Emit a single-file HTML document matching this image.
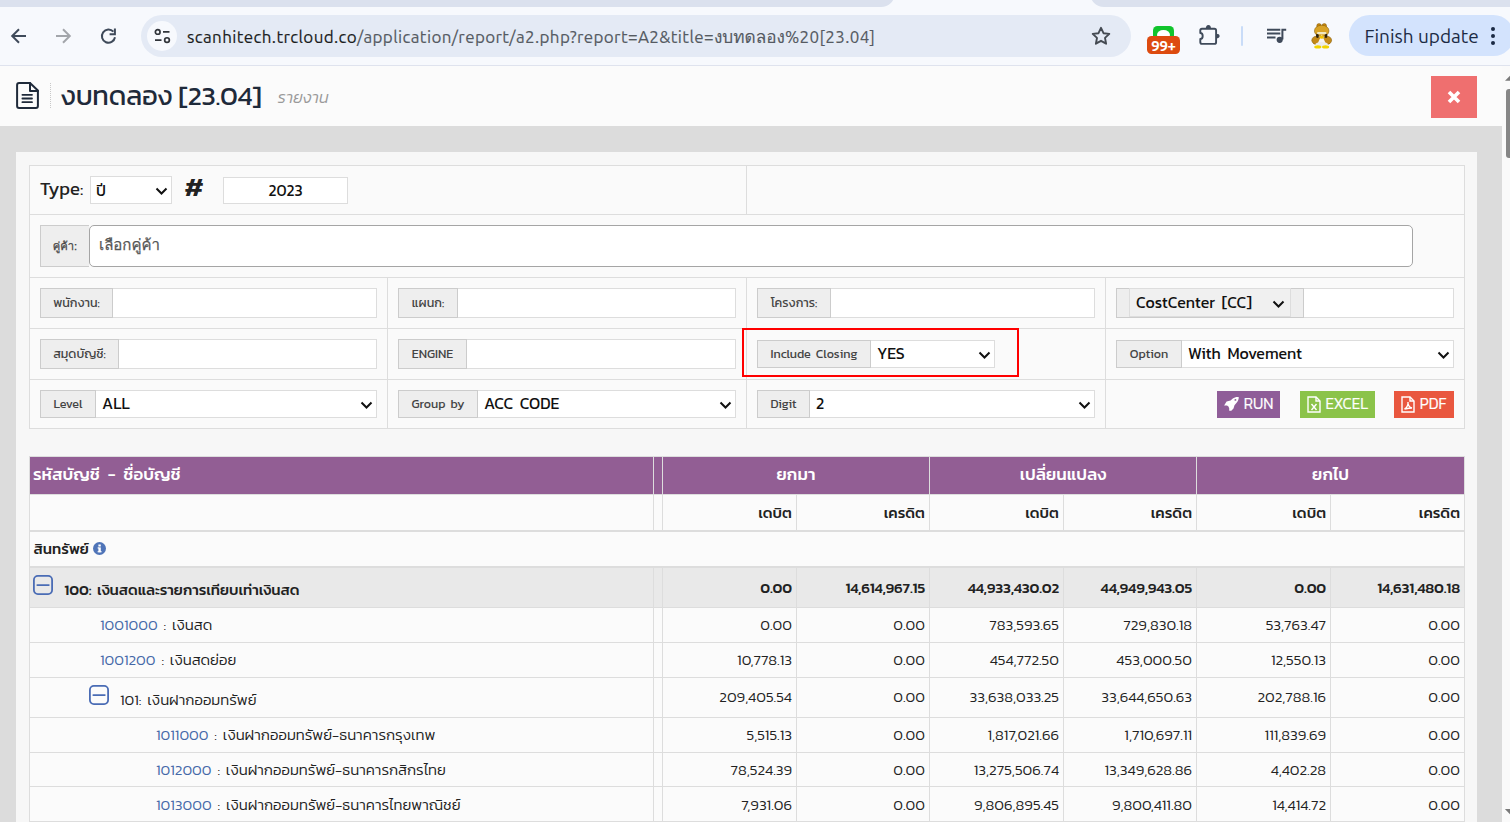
<!DOCTYPE html>
<html lang="th">
<head>
<meta charset="utf-8">
<title>งบทดลอง [23.04]</title>
<style>
*{box-sizing:border-box;margin:0;padding:0}
html,body{width:1510px;height:822px;overflow:hidden;background:#dcdcdc}
body{position:relative;font-family:"Kanit","Liberation Sans","Noto Sans Thai","Loma",sans-serif;font-weight:300;color:#222;font-size:15px}
.abs{position:absolute}
/* ---------- browser chrome ---------- */
#tabstrip{left:0;top:0;width:1510px;height:7px;background:#f7f9fd;overflow:hidden}
#tabstrip .t1{left:0;top:-10px;width:897px;height:16px;background:#dbe1ee;border-radius:0 0 14px 0}

#tabstrip .l{left:-20px;top:-13.4px;width:915px;height:20px;background:#dbe1ee;border-radius:0 0 14px 0}
#tabstrip .r{left:1090px;top:-13.4px;width:440px;height:20px;background:#dbe1ee;border-radius:0 0 0 14px}
#toolbar{left:0;top:7px;width:1510px;height:59px;background:#f7f9fd;border-bottom:1px solid #dfe3ee;font-family:"Ubuntu","Liberation Sans",sans-serif;font-weight:400}
#omni{left:141px;top:8px;width:990px;height:42px;border-radius:21px;background:#e4eaf5}
#omni .site{left:6px;top:6px;width:30px;height:30px;border-radius:50%;background:#f7f9fd}
#url{left:46px;top:0;height:42px;line-height:44.500px;font-size:17px;color:#555a62;white-space:nowrap;letter-spacing:0.370px;-webkit-text-stroke:0.150px currentColor}
#url b{font-weight:400;color:#1b1d21}
#url .th{font-size:101%;letter-spacing:0;font-family:"Ubuntu","Loma","Noto Sans Thai","Liberation Sans",sans-serif}
#finish{left:1349px;top:8px;width:165px;height:41px;border-radius:20.5px;background:#d3e3fd;color:#1b2a44;font-size:19px;line-height:43px;padding-left:15.500px;white-space:nowrap}
/* ---------- page header ---------- */
#phead{left:0;top:66px;width:1502px;height:60px;background:#fbfbfb}
#ptitle{left:60.500px;top:8px;font-size:27.400px;line-height:44px;font-weight:400;color:#1f2a3a;white-space:nowrap;letter-spacing:-0.3px}
#psub{left:277.500px;top:20px;font-size:16.400px;line-height:22px;font-style:italic;color:#999;font-weight:300;white-space:nowrap}
#sep{left:50px;top:17px;width:1px;height:26px;background:repeating-linear-gradient(to bottom,#c8c8c8 0,#c8c8c8 1px,transparent 1px,transparent 2px)}
#close{left:1431px;top:10px;width:46px;height:42px;background:#ef6f6f}
/* ---------- scrollbar ---------- */
#sbar{left:1502px;top:66px;width:8px;height:756px;background:#fafafa;overflow:hidden}
#sthumb{left:3.900px;top:23.400px;width:10px;height:68.300px;border-radius:3px;background:#868686}
/* ---------- content ---------- */
#panel{left:16px;top:152px;width:1461px;height:680px;background:#f7f7f7}
table{border-collapse:collapse;table-layout:fixed}
#filt{left:29px;top:165px;width:1435px}
#filt td{border:1px solid #ddd;background:#fafafa;position:relative;padding:0}
.ig{position:absolute;display:flex;height:30px}
.ig.s28{height:28px}
.ig.s28 .ad{line-height:26px}
.ig.s28 .in{line-height:25px}
.loma{font-family:"Loma","Noto Sans Thai Looped","Liberation Sans",sans-serif;font-weight:400;-webkit-text-stroke:0.25px currentColor}
.ig .ad{background:#eee;border:1px solid #ccc;color:#444;font-size:12.5px;font-weight:400;padding:0;text-align:center;word-spacing:2px;line-height:28px;white-space:nowrap;flex:none}
.ig .in{word-spacing:3px;background:#fff;border:1px solid #ddd;border-left:0;flex:1;position:relative;font-size:16px;font-weight:400;color:#111;line-height:26px;padding-left:6px;white-space:nowrap}
.chev{position:absolute;right:3.500px;top:8.500px;width:13px;height:10px}
.btn{position:absolute;top:11px;height:27px;overflow:hidden;color:#fff;font-size:15.300px;font-weight:300;line-height:26.500px;white-space:nowrap;-webkit-text-stroke:0.2px #fff}
/* ---------- data table ---------- */
#data{left:29px;top:456px;width:1435px;font-size:15px;word-spacing:2.400px}
#data td{border:1px solid #ddd;padding:0 4px;white-space:nowrap;overflow:hidden;background:#fbfbfb;text-align:right;color:#222;line-height:22px}
#data tr.h1 td{background:#925e94;color:#fff;font-weight:500;font-size:17px;text-align:center;height:38px;border-color:#ddd;border-top-color:#ddd;padding-bottom:4px}
#data tr.h2 td{height:36px;font-weight:500;border-bottom:2px solid #ddd;padding-top:1px}
#data td.l{text-align:left}
#data tr.s0 td{height:36px;font-weight:500;border-bottom:2px solid #ddd;padding-left:3.500px}
#data tr.g td{background:#e9e9e9;font-weight:500;height:41px;padding-top:1px;letter-spacing:-0.150px}
#data tr.g .gt{letter-spacing:-0.070px}
#data tr.last td{padding-top:2px}
#data tr.r td{height:35px;padding-bottom:0}
#data tr.r34 td{height:34px}
#data tr.s td{height:40px;padding-bottom:2px}
#data tr.s td.l,#data tr.g td.l{padding-top:0;padding-bottom:0}
#data a{color:#4468a8;text-decoration:none}
.gt{position:relative;top:3.300px}
.pm{display:inline-block;position:relative;vertical-align:middle}
</style>
</head>
<body>
<!-- browser chrome -->
<div id="tabstrip" class="abs"><div class="l abs"></div><div class="r abs"></div></div>
<div id="toolbar" class="abs">
  <svg class="abs" style="left:9px;top:18.9px" width="20" height="20" viewBox="0 0 20 20" fill="none" stroke="#3f4a5a" stroke-width="2"><path d="M17 10H4M10 3.200L3.200 10l6.800 6.800"/></svg>
  <svg class="abs" style="left:53px;top:18.9px" width="20" height="20" viewBox="0 0 20 20" fill="none" stroke="#a3a6ab" stroke-width="2"><path d="M3 10h13M10 3.200L16.800 10l-6.800 6.800"/></svg>
  <svg class="abs" style="left:98px;top:17.500px" width="22" height="22" viewBox="0 0 22 22" fill="none" stroke="#3f4a5a" stroke-width="2"><path d="M17 12.300A6.600 6.600 0 1 1 15.400 6.700"/><path d="M16.900 3.600V9.200H11.600" /></svg>
  <div id="omni" class="abs">
    <div class="site abs"></div>
    <svg class="abs" style="left:11px;top:11px" width="20" height="20" viewBox="0 0 20 20" fill="none" stroke="#30343a" stroke-width="1.700"><circle cx="5.700" cy="5.900" r="2.350"/><path d="M11 5.900h6.500M3 14.100h6.500"/><circle cx="15" cy="14.100" r="2.350"/></svg>
    <div id="url" class="abs"><b>scanhitech.trcloud.co</b>/application/report/a2.php?report=A2&amp;title=<span class="th">งบทดลอง</span>%20[23.04]</div>
    <svg class="abs" style="left:948px;top:9px" width="24" height="24" viewBox="0 0 24 24" fill="none" stroke="#444a52" stroke-width="1.900" stroke-linejoin="round"><path d="M12 3.800l2.500 5.400 5.800.7-4.300 4 1.100 5.800-5.100-2.900-5.100 2.900 1.100-5.800-4.300-4 5.800-.7z"/></svg>
  </div>
  <!-- extension w/ badge -->
  <div class="abs" style="left:1153px;top:19px;width:21px;height:16px;border-radius:4.500px 4.500px 0 0;background:#10c42c"></div>
  <div class="abs" style="left:1157px;top:22.500px;width:12.500px;height:10px;border-radius:50%;background:#fff"></div>
  <div class="abs" style="left:1147px;top:29.400px;width:33px;height:17.800px;border-radius:4.500px;background:#dd4b10;color:#fff;font-size:15px;font-weight:700;line-height:19.500px;text-align:center;letter-spacing:-0.3px">99+</div>
  <!-- puzzle -->
  <svg class="abs" style="left:1197px;top:15px" width="26" height="26" viewBox="0 0 26 26" fill="none" stroke="#3f4a5a" stroke-width="1.900" stroke-linejoin="round"><path d="M5 6.700H17.400Q19.100 6.700 19.100 8.400V20.200Q19.100 21.900 17.400 21.900H5Q3.300 21.900 3.300 20.200V17A2.400 3 0 0 0 3.300 11V8.400Q3.300 6.700 5 6.700Z"/><path d="M8.800 7A2.600 3.900 0 0 1 14 7Z" fill="#3f4a5a" stroke="none"/><path d="M19 11.800A3.600 2.300 0 0 1 19 16.400Z" fill="#3f4a5a" stroke="none"/></svg>
  <div class="abs" style="left:1241px;top:19px;width:2px;height:19.500px;background:#c9dcf8;border-radius:1px"></div>
  <!-- media -->
  <svg class="abs" style="left:1262px;top:15.700px" width="28" height="26" viewBox="0 0 28 26" fill="none" stroke="#3f4a5a" stroke-width="2"><path d="M5 6.800H18.300M5 10.600H18.300M5 14.400H13.500"/><path d="M20.400 16.500V6.800H24.200"/><circle cx="17.700" cy="16.800" r="3.100" fill="#3f4a5a" stroke="none"/></svg>
  <!-- avatar -->
  <svg class="abs" style="left:1310px;top:14.600px" width="24" height="28" viewBox="0 0 24 28"><g stroke="#7d5406" stroke-width="0.500"><circle cx="9" cy="3.900" r="2.300" fill="#c98a10"/><circle cx="14.300" cy="3.900" r="2.300" fill="#c98a10"/><ellipse cx="11.700" cy="8.900" rx="7.300" ry="5.700" fill="#d9a326"/><ellipse cx="6.300" cy="18.300" rx="4.500" ry="4" fill="#c48a18"/><ellipse cx="17.100" cy="18.300" rx="4.500" ry="4" fill="#c48a18"/></g><ellipse cx="7.400" cy="13.800" rx="1.400" ry="2.300" fill="#2e2008"/><ellipse cx="16" cy="13.800" rx="1.400" ry="2.300" fill="#2e2008"/><path d="M11.700 12.500L7.300 22.500Q11.700 24.500 16.200 22.500Z" fill="#f6f6f6"/><ellipse cx="11.700" cy="22.200" rx="6.300" ry="2.200" fill="#ececec"/><rect x="7" y="10" width="9.500" height="2.300" rx="1.100" fill="#efe7c0"/><ellipse cx="11.700" cy="15.200" rx="1.900" ry="1.600" fill="#f2c400"/><ellipse cx="7.800" cy="24.900" rx="3.600" ry="1.700" fill="#f2d400"/><ellipse cx="15.600" cy="24.900" rx="3.600" ry="1.700" fill="#f2d400"/></svg>
  <div id="finish" class="abs">Finish update</div>
  <div class="abs" style="left:1491px;top:20px;width:4px;height:4px;border-radius:50%;background:#1b2a44;box-shadow:0 7px 0 #1b2a44,0 14px 0 #1b2a44"></div>
</div>

<!-- page header -->
<div id="phead" class="abs">
  <svg class="abs" style="left:15px;top:15px" width="26" height="30" viewBox="0 0 26 30" fill="none" stroke="#1f2a3a" stroke-width="2" stroke-linejoin="round" stroke-linecap="round"><path d="M4.100 2.100H15L22.900 9.500V25Q22.900 27 20.900 27H4.100Q2.100 27 2.100 25V4.100Q2.100 2.100 4.100 2.100Z"/><path d="M15 2.100V10H22.900"/><path d="M7.400 13.800H17M7.400 17.500H17M7.400 21.200H17" stroke-width="1.800"/></svg>
  <div id="sep" class="abs"></div>
  <div id="ptitle" class="abs">งบทดลอง [23.04]</div>
  <div id="psub" class="abs">รายงาน</div>
  <div id="close" class="abs"><svg class="abs" style="left:16px;top:14px" width="14" height="14" viewBox="0 0 14 14" stroke="#fff" stroke-width="3.600"><path d="M2 2l10 10M12 2L2 12"/></svg></div>
</div>
<div id="sbar" class="abs">
  <svg class="abs" style="left:0;top:0" width="8" height="756" viewBox="0 0 8 756"><path d="M3 14.700L8 9.700V14.700Z" fill="#7a7a7a"/><path d="M2.900 743H8V748.200Z" fill="#7a7a7a"/></svg>
  <div id="sthumb" class="abs"></div>
</div>

<div id="panel" class="abs"></div>
<table id="filt" class="abs">
<colgroup><col style="width:358px"><col style="width:359px"><col style="width:359px"><col style="width:359px"></colgroup>
<tr style="height:49px">
  <td colspan="2">
    <div class="abs" style="left:10px;top:10px;font-size:18.500px;font-weight:400;line-height:26px;color:#222">Type:</div>
    <div class="abs" style="left:60px;top:10px;width:82px;height:28px;border:1px solid #ddd;background:#fff;font-size:16px;font-weight:400;line-height:26px;padding-left:5px;color:#111">ปี<svg class="chev" viewBox="0 0 13 10" fill="none" stroke="#111" stroke-width="2"><path d="M1.500 2.500l5 5 5-5"/></svg></div>
    <div class="abs" style="left:154.500px;top:4.500px;font-size:27px;font-weight:600;line-height:32px;color:#222">#</div>
    <div class="abs" style="left:193px;top:11px;width:125px;height:27px;border:1px solid #ddd;background:#fff;font-size:15.500px;font-weight:400;line-height:25px;text-align:center;color:#111">2023</div>
  </td>
  <td colspan="2"></td>
</tr>
<tr style="height:63px">
  <td colspan="4">
    <div class="abs loma" style="left:10px;top:10px;width:49px;height:42px;background:#eee;border:1px solid #ccc;border-right:0;font-size:11.200px;color:#444;line-height:40px;text-align:center">คู่ค้า:</div>
    <div class="abs loma" style="left:59px;top:10px;width:1324px;height:42px;background:#fff;border:1px solid #a5a5a5;border-radius:5px;font-size:15px;color:#555;line-height:38px;padding-left:9px">เลือกคู่ค้า</div>
  </td>
</tr>
<tr style="height:51px">
  <td><div class="ig" style="left:10px;top:10px;width:337px"><div class="ad" style="width:73px">พนักงาน:</div><div class="in"></div></div></td>
  <td><div class="ig" style="left:10px;top:10px;width:338px"><div class="ad" style="width:60px">แผนก:</div><div class="in"></div></div></td>
  <td><div class="ig" style="left:10px;top:10px;width:338px"><div class="ad" style="width:74px">โครงการ:</div><div class="in"></div></div></td>
  <td><div class="ig" style="left:10px;top:10px;width:338px"><div class="ad" style="width:188px;padding:0;position:relative"><div class="abs" style="left:12px;top:-1px;width:162px;height:29px;border:1px solid #ddd;background:#f0f0f0;font-size:16px;color:#111;line-height:27px;padding-left:6px;text-align:left;word-spacing:3px">CostCenter [CC]<svg class="chev" style="right:5px;top:10px" viewBox="0 0 13 10" fill="none" stroke="#111" stroke-width="2"><path d="M1.500 2.500l5 5 5-5"/></svg></div></div><div class="in"></div></div></td>
</tr>
<tr style="height:51px">
  <td><div class="ig" style="left:10px;top:10px;width:337px"><div class="ad" style="width:79px">สมุดบัญชี:</div><div class="in"></div></div></td>
  <td><div class="ig" style="left:10px;top:10px;width:338px"><div class="ad" style="width:69px">ENGINE</div><div class="in"></div></div></td>
  <td><div class="ig s28" style="left:10px;top:11px;width:238px"><div class="ad" style="width:114px">Include Closing</div><div class="in">YES<svg class="chev" viewBox="0 0 13 10" fill="none" stroke="#111" stroke-width="2"><path d="M1.500 2.500l5 5 5-5"/></svg></div></div>
      <div class="abs" style="left:-4.800px;top:-1.500px;width:276.500px;height:49.100px;border:2px solid #f00"></div></td>
  <td><div class="ig s28" style="left:10px;top:11px;width:338px"><div class="ad" style="width:66px">Option</div><div class="in">With Movement<svg class="chev" viewBox="0 0 13 10" fill="none" stroke="#111" stroke-width="2"><path d="M1.500 2.500l5 5 5-5"/></svg></div></div></td>
</tr>
<tr style="height:49px">
  <td><div class="ig s28" style="left:10px;top:10px;width:337px"><div class="ad" style="width:56px">Level</div><div class="in">ALL<svg class="chev" viewBox="0 0 13 10" fill="none" stroke="#111" stroke-width="2"><path d="M1.500 2.500l5 5 5-5"/></svg></div></div></td>
  <td><div class="ig s28" style="left:10px;top:10px;width:338px"><div class="ad" style="width:80px">Group by</div><div class="in">ACC CODE<svg class="chev" viewBox="0 0 13 10" fill="none" stroke="#111" stroke-width="2"><path d="M1.500 2.500l5 5 5-5"/></svg></div></div></td>
  <td><div class="ig s28" style="left:10px;top:10px;width:338px"><div class="ad" style="width:53px">Digit</div><div class="in">2<svg class="chev" viewBox="0 0 13 10" fill="none" stroke="#111" stroke-width="2"><path d="M1.500 2.500l5 5 5-5"/></svg></div></div></td>
  <td>
    <div class="btn" style="left:111px;width:63px;background:#8f5d98;padding-left:26.800px">RUN<svg class="abs" style="left:0;top:0" width="27" height="27" viewBox="0 0 27 27" fill="#fff"><path d="M21.700 6.100C19.500 5.800 17.500 6.300 15.800 7.600L13.600 9.400L9.600 10.400L7.100 14.400L10 14.400Q11.800 15.200 12.200 17.200L12.200 19.800L14.300 19.800L16.500 17.600L17.500 14.300L19.800 11.600C21.200 9.900 21.900 8 21.700 6.100Z"/><circle cx="18.400" cy="8.900" r="0.950" fill="#8f5d98"/></svg></div>
    <div class="btn" style="left:194px;width:75px;background:#8bc34a;padding-left:25.500px">EXCEL<svg class="abs" style="left:7px;top:5px" width="14" height="17" viewBox="0 0 14 17" fill="none" stroke="#fff" stroke-width="1.400"><path d="M1 1h8l4 4v11H1z"/><path d="M9 1v4h4M4.500 8l5 6M9.500 8l-5 6"/></svg></div>
    <div class="btn" style="left:288px;width:60px;background:#e9573f;padding-left:25.800px">PDF<svg class="abs" style="left:7px;top:5px" width="14" height="17" viewBox="0 0 14 17" fill="none" stroke="#fff" stroke-width="1.400"><path d="M1 1h8l4 4v11H1z"/><path d="M9 1v4h4M3.500 13c2-1 4-4 3.500-7-.500 3 1.500 5.500 4 6-2.500 0-5 .500-7.500 1z"/></svg></div>
  </td>
</tr>
</table>

<table id="data" class="abs">
<colgroup><col style="width:624px"><col style="width:9px"><col style="width:134px"><col style="width:133px"><col style="width:134px"><col style="width:133px"><col style="width:134px"><col style="width:134px"></colgroup>
<tr class="h1"><td class="l" style="text-align:left;padding-left:3px;word-spacing:4px">รหัสบัญชี - ชื่อบัญชี</td><td></td><td colspan="2">ยกมา</td><td colspan="2">เปลี่ยนแปลง</td><td colspan="2">ยกไป</td></tr>
<tr class="h2"><td></td><td></td><td>เดบิต</td><td>เครดิต</td><td>เดบิต</td><td>เครดิต</td><td>เดบิต</td><td>เครดิต</td></tr>
<tr class="s0"><td class="l" colspan="8">สินทรัพย์ <svg width="13" height="13" viewBox="0 0 13 13" style="vertical-align:-1.500px;margin-left:-1.700px"><circle cx="6.500" cy="6.500" r="6.500" fill="#4f74b8"/><rect x="5.400" y="5.400" width="2.400" height="4.800" fill="#fff"/><rect x="5.400" y="2.500" width="2.400" height="2" fill="#fff"/><rect x="4.600" y="5.400" width="1.500" height="1.100" fill="#fff"/><rect x="4.600" y="9.200" width="4" height="1.100" fill="#fff"/></svg></td></tr>
<tr class="g"><td class="l" style="padding-left:3.300px"><svg class="pm" style="margin-right:11px;top:-3.200px" width="20" height="20" viewBox="0 0 20 20" fill="none" stroke="#4a6cb5" stroke-width="1.800" stroke-linecap="round"><rect x="0.900" y="0.900" width="18.200" height="18.200" rx="4"/><path d="M4.300 10.100H15.800"/></svg><span class="gt">100: เงินสดและรายการเทียบเท่าเงินสด</span></td><td></td><td>0.00</td><td>14,614,967.15</td><td>44,933,430.02</td><td>44,949,943.05</td><td>0.00</td><td>14,631,480.18</td></tr>
<tr class="r"><td class="l" style="padding-left:70px"><a>1001000</a> : เงินสด</td><td></td><td>0.00</td><td>0.00</td><td>783,593.65</td><td>729,830.18</td><td>53,763.47</td><td>0.00</td></tr>
<tr class="r"><td class="l" style="padding-left:70px"><a>1001200</a> : เงินสดย่อย</td><td></td><td>10,778.13</td><td>0.00</td><td>454,772.50</td><td>453,000.50</td><td>12,550.13</td><td>0.00</td></tr>
<tr class="s"><td class="l" style="padding-left:59px"><svg class="pm" style="margin-right:11px;top:-3.400px" width="20" height="20" viewBox="0 0 20 20" fill="none" stroke="#4a6cb5" stroke-width="1.800" stroke-linecap="round"><rect x="0.900" y="0.900" width="18.200" height="18.200" rx="4"/><path d="M4.300 10.100H15.800"/></svg><span class="gt" style="top:2.600px">101: เงินฝากออมทรัพย์</span></td><td></td><td>209,405.54</td><td>0.00</td><td>33,638,033.25</td><td>33,644,650.63</td><td>202,788.16</td><td>0.00</td></tr>
<tr class="r"><td class="l" style="padding-left:126px"><a>1011000</a> : เงินฝากออมทรัพย์-ธนาคารกรุงเทพ</td><td></td><td>5,515.13</td><td>0.00</td><td>1,817,021.66</td><td>1,710,697.11</td><td>111,839.69</td><td>0.00</td></tr>
<tr class="r r34"><td class="l" style="padding-left:126px"><a>1012000</a> : เงินฝากออมทรัพย์-ธนาคารกสิกรไทย</td><td></td><td>78,524.39</td><td>0.00</td><td>13,275,506.74</td><td>13,349,628.86</td><td>4,402.28</td><td>0.00</td></tr>
<tr class="r last"><td class="l" style="padding-left:126px"><a>1013000</a> : เงินฝากออมทรัพย์-ธนาคารไทยพาณิชย์</td><td></td><td>7,931.06</td><td>0.00</td><td>9,806,895.45</td><td>9,800,411.80</td><td>14,414.72</td><td>0.00</td></tr>
</table>

</body>
</html>
